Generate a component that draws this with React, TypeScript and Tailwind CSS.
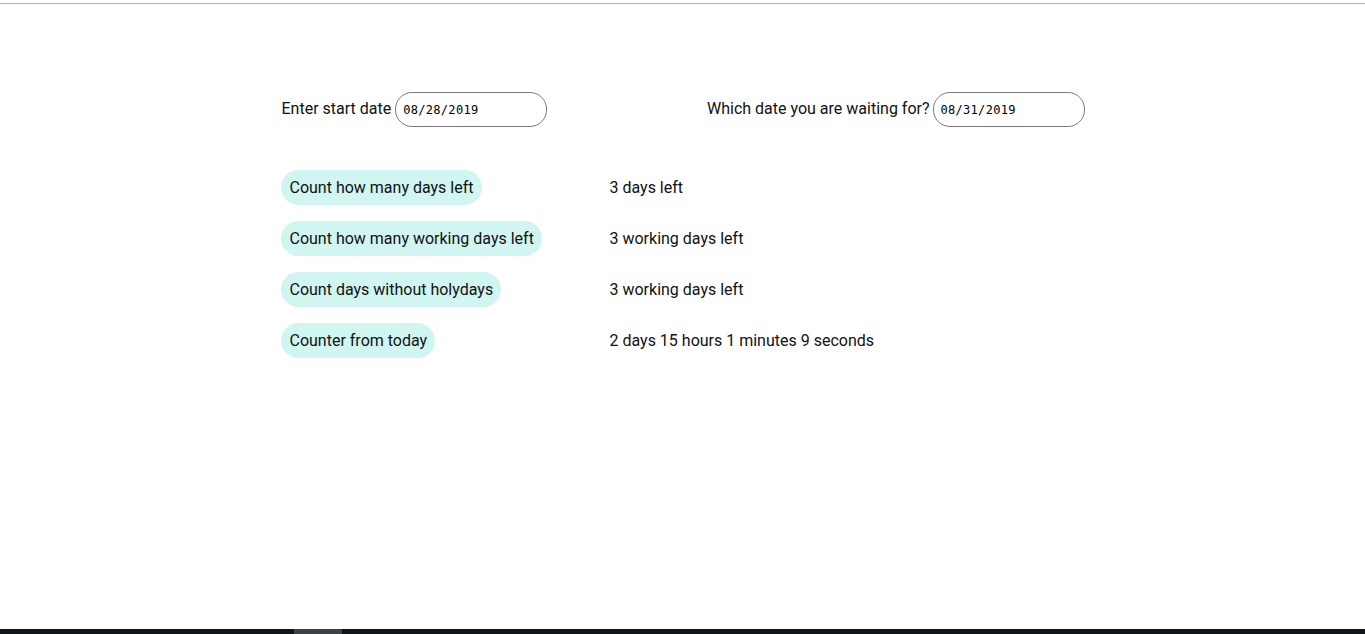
const rows = [
  { label: "Count how many days left", result: "3 days left" },
  { label: "Count how many working days left", result: "3 working days left" },
  { label: "Count days without holydays", result: "3 working days left" },
  { label: "Counter from today", result: "2 days 15 hours 1 minutes 9 seconds" },
];

const DateBox = ({ value }: { value: string }) => (
  <div className="flex items-center w-[152px] h-[35px] rounded-[17px] border border-[#7a7a7a] pl-[7px] bg-white">
    <span className="text-[12px] tracking-[0.3px] text-black" style={{ fontFamily: '"DejaVu Sans Mono", "Liberation Mono", monospace' }}>
      {value}
    </span>
  </div>
);

export default function App() {
  return (
    <div className="h-[634px] flex flex-col bg-white text-[#111] overflow-hidden" style={{ fontFamily: 'Roboto, "Liberation Sans", sans-serif' }}>
      <div className="mt-[3px] border-t border-[#b3b3b3]" />
      <div className="flex-1">
        <div className="w-[804px] mx-auto pt-[88px]">
          <div className="flex justify-between items-center text-[16px]">
            <div className="flex items-center gap-[4px] pl-[1px]">
              <span className="-mt-[2px]">Enter start date</span>
              <DateBox value="08/28/2019" />
            </div>
            <div className="flex items-center gap-[3px]">
              <span className="-mt-[2px]">Which date you are waiting for?</span>
              <DateBox value="08/31/2019" />
            </div>
          </div>
          <div className="grid grid-cols-[329px_1fr] gap-y-[16px] mt-[43px] text-[16px]">
            {rows.map((r) => (
              <div key={r.label} className="contents">
                <div>
                  <button className="h-[35px] pl-[9px] pr-[8px] rounded-full bg-[#d1f5f0] text-[#111]">{r.label}</button>
                </div>
                <div className="flex items-center h-[35px]">{r.result}</div>
              </div>
            ))}
          </div>
        </div>
      </div>
      <div className="h-[5px] bg-[#0d161b] flex">
        <div className="ml-[294px] w-[48px] bg-[#3a4247]" />
      </div>
    </div>
  );
}
